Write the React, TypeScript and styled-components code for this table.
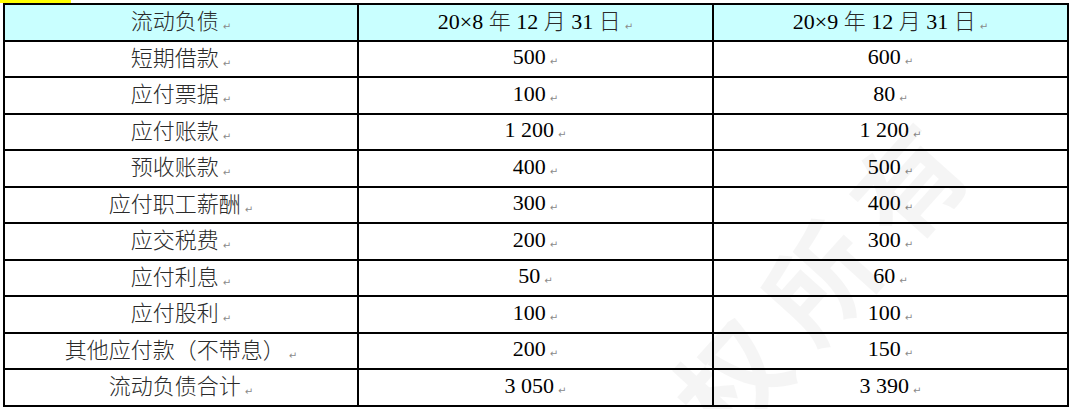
import React from "react";
import styled, { createGlobalStyle } from "styled-components";

type Row = { name: string; y8: string; y9: string };

const rows: Row[] = [
  { name: "短期借款", y8: "500", y9: "600" },
  { name: "应付票据", y8: "100", y9: "80" },
  { name: "应付账款", y8: "1 200", y9: "1 200" },
  { name: "预收账款", y8: "400", y9: "500" },
  { name: "应付职工薪酬", y8: "300", y9: "400" },
  { name: "应交税费", y8: "200", y9: "300" },
  { name: "应付利息", y8: "50", y9: "60" },
  { name: "应付股利", y8: "100", y9: "100" },
  { name: "其他应付款（不带息）", y8: "200", y9: "150" },
  { name: "流动负债合计", y8: "3 050", y9: "3 390" },
];

const GlobalStyle = createGlobalStyle`
  html, body {
    margin: 0;
    padding: 0;
    background: #fff;
  }
`;

const Page = styled.div`
  position: relative;
  width: 1073px;
  height: 409px;
  overflow: hidden;
  font-family: "Liberation Serif", "Noto Sans CJK SC", serif;
  color: #000;
`;

const Highlight = styled.div`
  width: 71px;
  height: 3px;
  background: #ffff00;
`;

const Table = styled.table`
  margin-left: 3px;
  width: 1066px;
  border-collapse: collapse;
  table-layout: fixed;
`;

const Cell = styled.td<{ $head?: boolean; $cjk?: boolean }>`
  border: 2px solid #000;
  height: 36.5px;
  padding: 2px 0 0;
  box-sizing: border-box;
  text-align: center;
  vertical-align: middle;
  font-size: 22px;
  font-weight: 400;
  line-height: 24px;
  white-space: nowrap;
  background: ${(p) => (p.$head ? "#c9ffff" : "transparent")};
  font-family: ${(p) =>
    p.$cjk
      ? `"Noto Sans CJK SC", sans-serif`
      : `"Liberation Serif", "Noto Sans CJK SC", serif`};
  color: ${(p) => (p.$cjk ? "#2a2a2a" : "#000")};
`;

const Han = styled.span`
  font-family: "Noto Sans CJK SC", sans-serif;
  font-weight: 300;
  color: #2a2a2a;
  font-size: 22px;
`;

const Name = styled.span`
  font-weight: 300;
  font-size: 22px;
`;

const Mark = styled.span`
  display: inline-block;
  margin-left: 4px;
  font-family: "DejaVu Sans", sans-serif;
  font-weight: 400;
  font-size: 10px;
  color: #8a8a8a;
  vertical-align: -1px;
`;

const Watermark = styled.div`
  position: absolute;
  left: 780px;
  top: 318px;
  transform: translate(-50%, -50%) rotate(-48deg);
  font-family: "Noto Sans CJK SC", sans-serif;
  font-weight: 700;
  font-size: 108px;
  letter-spacing: 24px;
  white-space: nowrap;
  color: rgba(0, 0, 0, 0.04);
  pointer-events: none;
`;

const DateHead: React.FC<{ year: string }> = ({ year }) => (
  <>
    {year} <Han>年</Han> 12 <Han>月</Han> 31 <Han>日</Han>
  </>
);

const App: React.FC = () => {
  return (
    <Page>
      <GlobalStyle />
      <Highlight />
      <Table>
        <colgroup>
          <col style={{ width: 354 }} />
          <col style={{ width: 355 }} />
          <col style={{ width: 355 }} />
        </colgroup>
        <thead>
          <tr>
            <Cell as="th" $head $cjk>
              <Name>流动负债</Name>
              <Mark>↵</Mark>
            </Cell>
            <Cell as="th" $head>
              <DateHead year="20×8" />
              <Mark>↵</Mark>
            </Cell>
            <Cell as="th" $head>
              <DateHead year="20×9" />
              <Mark>↵</Mark>
            </Cell>
          </tr>
        </thead>
        <tbody>
          {rows.map((r) => (
            <tr key={r.name}>
              <Cell $cjk>
                <Name>{r.name}</Name>
                <Mark>↵</Mark>
              </Cell>
              <Cell>
                {r.y8}
                <Mark>↵</Mark>
              </Cell>
              <Cell>
                {r.y9}
                <Mark>↵</Mark>
              </Cell>
            </tr>
          ))}
        </tbody>
      </Table>
      <Watermark>版权所有</Watermark>
    </Page>
  );
};

export default App;
